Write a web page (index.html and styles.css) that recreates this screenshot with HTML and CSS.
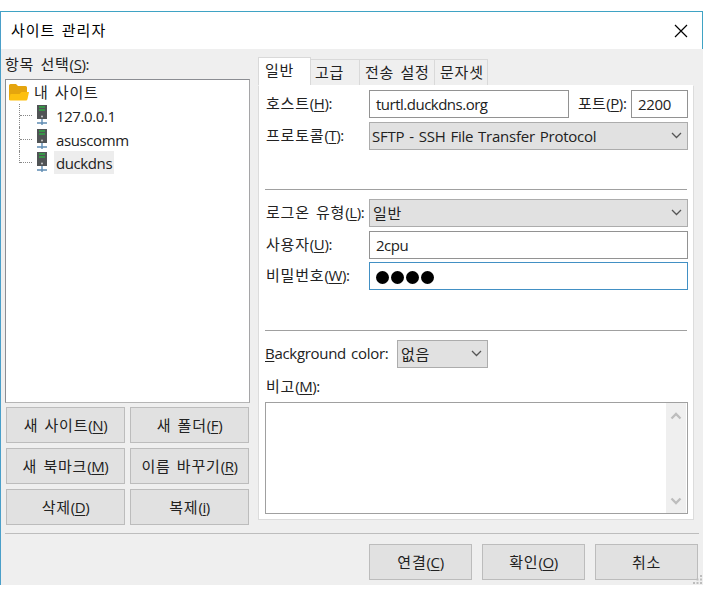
FILE: index.html
```html
<!DOCTYPE html>
<html lang="ko">
<head>
<meta charset="utf-8">
<title>사이트 관리자</title>
<link rel="stylesheet" href="styles.css">
</head>
<body>
<div class="window">
  <header class="titlebar">
    <span>사이트 관리자</span>
    <svg class="close" width="14" height="14" viewBox="0 0 14 14"><path d="M1 1L13 13M13 1L1 13"/></svg>
  </header>
  <main class="content">
    <section class="sites">
      <div class="sites-label">항목 선택<span class="key">(<u>S</u>):</span></div>
      <div class="tree">
        <div class="root">
          <svg width="20" height="17" viewBox="0 0 20 17"><path fill="#e5a50e" d="M0 1.500Q0 0 1.500 0H7L9 2H16.500Q18 2 18 3.500V16H0Z"/><path fill="#fdc00f" d="M0 16L1.500 10H10.500L12.500 8H20L18.500 15Q18.200 16.500 17 16.500H1.500Q0 16.500 0 15Z"/></svg>
          <span>내 사이트</span>
        </div>
        <div class="node"><i class="branch"></i><svg class="server" width="12" height="20" viewBox="0 0 12 20"><path class="case" d="M1 0H11V14H1Z"/><path class="led" d="M3 2H9M3 5H9"/><circle cx="6" cy="11.500" r="1" fill="#ccc"/><path class="net" d="M6 14V20M1 18H11"/></svg><span class="name">127.0.0.1</span></div>
        <div class="node"><i class="branch"></i><svg class="server" width="12" height="20" viewBox="0 0 12 20"><path class="case" d="M1 0H11V14H1Z"/><path class="led" d="M3 2H9M3 5H9"/><circle cx="6" cy="11.500" r="1" fill="#ccc"/><path class="net" d="M6 14V20M1 18H11"/></svg><span class="name">asuscomm</span></div>
        <div class="node"><i class="branch last"></i><svg class="server" width="12" height="20" viewBox="0 0 12 20"><path class="case" d="M1 0H11V14H1Z"/><path class="led" d="M3 2H9M3 5H9"/><circle cx="6" cy="11.500" r="1" fill="#ccc"/><path class="net" d="M6 14V20M1 18H11"/></svg><span class="name selected">duckdns</span></div>
      </div>
      <div class="actions">
        <button>새 사이트<span class="key">(<u>N</u>)</span></button>
        <button>새 폴더<span class="key">(<u>F</u>)</span></button>
        <button>새 북마크<span class="key">(<u>M</u>)</span></button>
        <button>이름 바꾸기<span class="key">(<u>R</u>)</span></button>
        <button>삭제<span class="key">(<u>D</u>)</span></button>
        <button>복제<span class="key">(<u>i</u>)</span></button>
      </div>
    </section>
    <section class="settings">
      <nav class="tabs">
        <span class="tab active">일반</span><span class="tab advanced">고급</span><span class="tab transfer">전송 설정</span><span class="tab charset">문자셋</span>
      </nav>
      <div class="panel">
        <div class="row">
          <label>호스트<span class="key">(<u>H</u>):</span></label>
          <div class="field host">turtl.duckdns.org</div>
          <label class="port-label">포트<span class="key">(<u>P</u>):</span></label>
          <div class="field port">2200</div>
        </div>
        <div class="row">
          <label>프로토콜<span class="key">(<u>T</u>):</span></label>
          <div class="select"><span class="protocol">SFTP - SSH File Transfer Protocol</span><svg width="11" height="7" viewBox="0 0 11 7"><path d="M1 1L5.500 5.500L10 1"/></svg></div>
        </div>
        <hr class="rule">
        <div class="row">
          <label>로그온 유형<span class="key">(<u>L</u>):</span></label>
          <div class="select"><span>일반</span><svg width="11" height="7" viewBox="0 0 11 7"><path d="M1 1L5.500 5.500L10 1"/></svg></div>
        </div>
        <div class="row">
          <label>사용자<span class="key">(<u>U</u>):</span></label>
          <div class="field">2cpu</div>
        </div>
        <div class="row password">
          <label>비밀번호<span class="key">(<u>W</u>):</span></label>
          <div class="field focus"><i></i><i></i><i></i><i></i></div>
        </div>
        <hr class="rule lower">
        <div class="row">
          <label class="bg-label"><u>B</u>ackground color:</label>
          <div class="select color"><span>없음</span><svg width="11" height="7" viewBox="0 0 11 7"><path d="M1 1L5.500 5.500L10 1"/></svg></div>
        </div>
        <label class="notes-label">비고<span class="key">(<u>M</u>):</span></label>
        <div class="notes">
          <div class="scrollbar">
            <svg width="12" height="8" viewBox="0 0 12 8"><path d="M1.500 6.500L6 2L10.500 6.500"/></svg>
            <svg width="12" height="8" viewBox="0 0 12 8"><path d="M1.500 1.500L6 6L10.500 1.500"/></svg>
          </div>
        </div>
      </div>
    </section>
  </main>
  <footer class="footer">
    <button>연결<span class="key">(<u>C</u>)</span></button>
    <button>확인<span class="key">(<u>O</u>)</span></button>
    <button>취소</button>
    <svg class="grip" width="10" height="10" viewBox="0 0 10 10"><path d="M7 0h2v2h-2zM7 3.500h2v2h-2zM3.500 3.500h2v2h-2zM7 7h2v2h-2zM3.500 7h2v2h-2zM0 7h2v2h-2z"/></svg>
  </footer>
</div>
</body>
</html>
```
FILE: styles.css
```css
* { box-sizing: border-box; }
body {
  margin: 0;
  padding-top: 11px;
  height: 596px;
  background: #fff;
  color: #222;
  font: 15px/20px "Open Sans", "Noto Sans CJK KR", sans-serif;
  letter-spacing: .8px;
  word-spacing: 1.5px;
  white-space: nowrap;
  overflow: hidden;
}
.window { height: 574px; background: #efefef; border-left: 1px solid #4a9fc9; }
.titlebar {
  height: 38px;
  display: flex;
  align-items: center;
  justify-content: space-between;
  padding: 0 14px 2px 10px;
  background: #fff;
  border-top: 1px solid #3fa3c4;
  border-right: 1px solid #3fa3c4;
  color: #000;
  letter-spacing: 1px;
}
.close { fill: none; stroke: #000; stroke-width: 1.2; margin-top: 2px; }
.content { height: 484px; display: flex; padding-left: 4px; }
.sites { width: 245px; }
.sites-label { height: 30px; padding-top: 5px; }
.key { letter-spacing: -.4px; }
u { text-underline-offset: 2px; text-decoration-thickness: 1px; text-decoration-skip-ink: none; }
.tree {
  height: 324px;
  border: 1px solid #8b8d92;
  border-right-color: #a5a5a7;
  border-bottom-color: #b5b5b5;
  background: #fff;
  padding: 1px 0 0 3px;
}
.root { height: 23px; display: flex; align-items: center; gap: 5px; }
.root span { margin-top: -2px; }
.node { height: 23.400px; display: flex; align-items: center; letter-spacing: -.4px; }
.branch { width: 13px; height: 23.400px; margin-left: 10px; border-left: 1px dotted #888; display: flex; align-items: center; }
.branch::after { content: ""; width: 13px; border-top: 1px dotted #888; }
.branch.last { height: 12px; align-self: flex-start; align-items: flex-end; }
.server { margin: 0 6px 1px 4px; }
.case { fill: #505355; }
.led { stroke: #2faa43; stroke-width: 1.3; fill: none; }
.net { stroke: #5f8cb3; stroke-width: 1.4; }
.name { padding: 1px 2px; height: 23px; line-height: 22px; }
.selected { background: #ededed; }
.actions {
  display: grid;
  grid-template-columns: 119px 119px;
  grid-auto-rows: 36px;
  gap: 5px;
  padding: 4px 0 0 1px;
}
button {
  padding: 0 0 1px;
  border: 1px solid #bcbcbc;
  background: #e1e1e1;
  color: #222;
  font: inherit;
  letter-spacing: inherit;
  word-spacing: inherit;
  white-space: nowrap;
}
.settings { width: 436px; margin-left: 8px; padding-top: 8px; }
.tabs { height: 28px; display: flex; align-items: flex-end; }
.tab {
  height: 26px;
  border: 1px solid #d9d9d9;
  border-left: 0;
  border-bottom: 0;
  background: #efefef;
  padding: 2px 0 0 5px;
}
.active { width: 53px; height: 28px; background: #fff; border-left: 1px solid #d9d9d9; padding-left: 6px; }
.advanced { width: 49px; padding-left: 4px; }
.transfer { width: 75px; }
.charset { width: 53px; }
.panel {
  height: 435px;
  padding: 4px 5px 0 6px;
  border: 1px solid #dcdcdc;
  border-top-color: #fff;
  background: #fff;
}
.row { height: 28px; display: flex; align-items: center; margin-bottom: 4px; }
.row.password { margin-top: -1px; }
.row label { width: 104px; padding: 0 0 2px 1px; flex: none; }
.field, .select { flex: 1; height: 28px; border: 1px solid #929292; padding: 3px 6px; }
.field { letter-spacing: -.5px; }
.field.port { letter-spacing: -.3px; }
.field.host { flex: none; width: 200px; }
.row .port-label { width: 62px; padding-left: 9px; letter-spacing: .3px; }
.select {
  display: flex;
  align-items: center;
  justify-content: space-between;
  background: #e1e1e1;
  border-color: #acacac;
  padding: 0 5px 0 3px;
}
.protocol { letter-spacing: -.25px; word-spacing: 1.3px; margin-left: -1px; }
.select svg { fill: none; stroke: #555; stroke-width: 1.3; margin-top: -2px; }
.focus { border-color: #4290c4; display: flex; gap: 2px; padding: 8px 6px; }
.focus i { width: 13px; height: 13px; border-radius: 50%; background: #000; }
.rule { height: 1px; border: 0; background: #a0a0a0; width: 422px; margin: 39px 0 9px; }
.rule.lower { margin-top: 40px; }
.row .bg-label { width: 132px; padding-left: 0; letter-spacing: -.3px; }
.select.color { flex: none; width: 91px; }
.notes-label { display: block; height: 30px; padding: 4px 0 0 1px; }
.notes { height: 112px; border: 1px solid #a0a0a0; display: flex; justify-content: flex-end; padding-right: 1px; }
.scrollbar { width: 20px; background: #efefef; display: flex; flex-direction: column; align-items: center; justify-content: space-between; padding: 9px 0 8px; }
.scrollbar svg { fill: none; stroke: #bdbdbd; stroke-width: 2.3; }
.footer {
  height: 52px;
  margin: 0 4px;
  border-top: 1px solid #bdbdbd;
  display: flex;
  justify-content: flex-end;
  gap: 10px;
  padding: 10px 1px 0 0;
  position: relative;
}
.footer button { width: 103px; height: 36px; }
.grip { position: absolute; right: -4px; bottom: 0; fill: #bdbdbd; }
```
